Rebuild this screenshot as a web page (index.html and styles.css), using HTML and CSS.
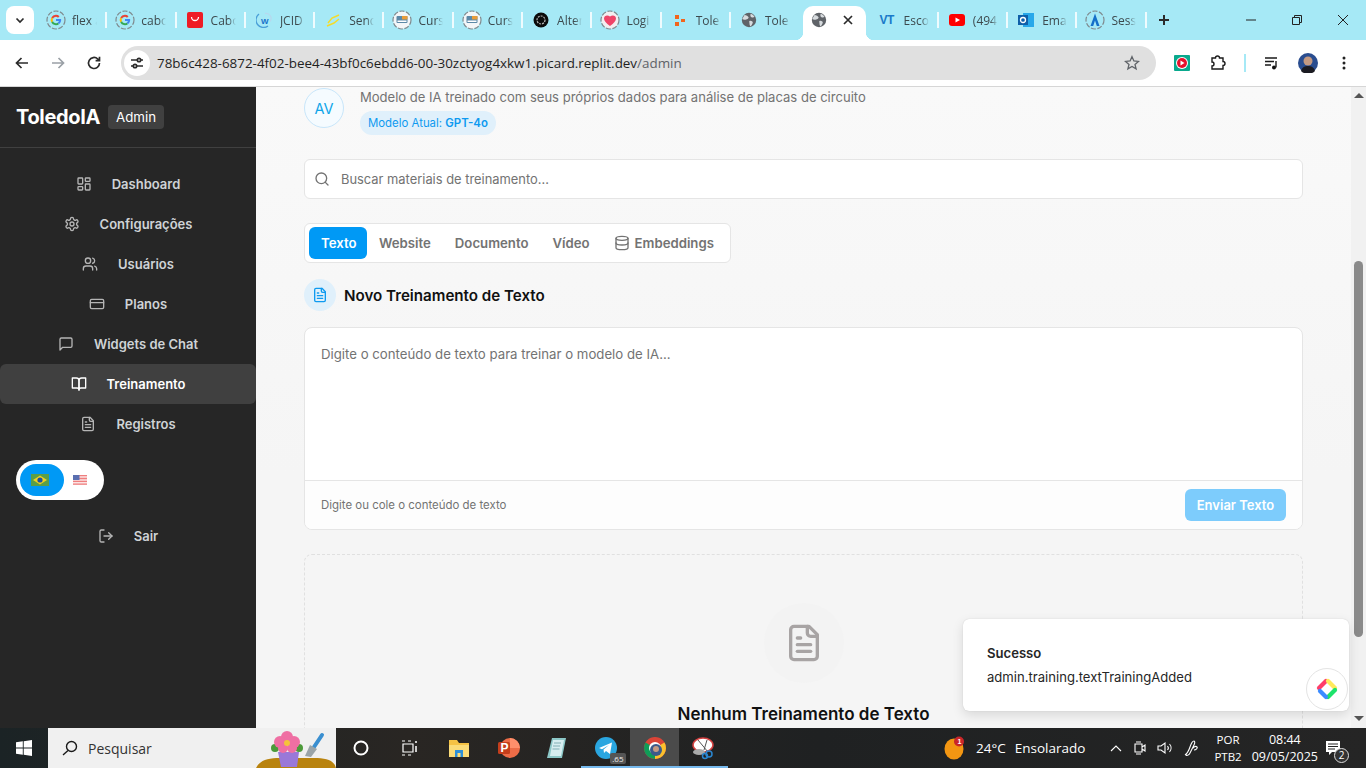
FILE: index.html
```html
<!DOCTYPE html>
<html lang="pt-BR">
<head>
<meta charset="utf-8">
<title>ToledoIA Admin</title>
<link rel="stylesheet" href="styles.css">
</head>
<body>
<svg class="defs" aria-hidden="true">
  <symbol id="i-dash" viewBox="0 0 24 24"><rect x="3" y="3" width="7" height="9" rx="1"/><rect x="14" y="3" width="7" height="5" rx="1"/><rect x="14" y="12" width="7" height="9" rx="1"/><rect x="3" y="16" width="7" height="5" rx="1"/></symbol>
  <symbol id="i-gear" viewBox="0 0 24 24"><path d="M12.22 2h-.44a2 2 0 0 0-2 2v.18a2 2 0 0 1-1 1.73l-.43.25a2 2 0 0 1-2 0l-.15-.08a2 2 0 0 0-2.73.73l-.22.38a2 2 0 0 0 .73 2.73l.15.1a2 2 0 0 1 1 1.72v.51a2 2 0 0 1-1 1.74l-.15.09a2 2 0 0 0-.73 2.73l.22.38a2 2 0 0 0 2.73.73l.15-.08a2 2 0 0 1 2 0l.43.25a2 2 0 0 1 1 1.73V20a2 2 0 0 0 2 2h.44a2 2 0 0 0 2-2v-.18a2 2 0 0 1 1-1.73l.43-.25a2 2 0 0 1 2 0l.15.08a2 2 0 0 0 2.73-.73l.22-.39a2 2 0 0 0-.73-2.73l-.15-.08a2 2 0 0 1-1-1.74v-.5a2 2 0 0 1 1-1.74l.15-.09a2 2 0 0 0 .73-2.73l-.22-.38a2 2 0 0 0-2.73-.73l-.15.08a2 2 0 0 1-2 0l-.43-.25a2 2 0 0 1-1-1.73V4a2 2 0 0 0-2-2z"/><circle cx="12" cy="12" r="3"/></symbol>
  <symbol id="i-users" viewBox="0 0 24 24"><path d="M16 21v-2a4 4 0 0 0-4-4H6a4 4 0 0 0-4 4v2"/><circle cx="9" cy="7" r="4"/><path d="M22 21v-2a4 4 0 0 0-3-3.87"/><path d="M16 3.13a4 4 0 0 1 0 7.75"/></symbol>
  <symbol id="i-card" viewBox="0 0 24 24"><rect x="2" y="5" width="20" height="14" rx="2"/><path d="M2 10h20"/></symbol>
  <symbol id="i-chat" viewBox="0 0 24 24"><path d="M21 15a2 2 0 0 1-2 2H7l-4 4V5a2 2 0 0 1 2-2h14a2 2 0 0 1 2 2z"/></symbol>
  <symbol id="i-book" viewBox="0 0 24 24"><path d="M2 3h6a4 4 0 0 1 4 4v14a3 3 0 0 0-3-3H2z"/><path d="M22 3h-6a4 4 0 0 0-4 4v14a3 3 0 0 1 3-3h7z"/></symbol>
  <symbol id="i-file" viewBox="0 0 24 24"><path d="M15 2H6a2 2 0 0 0-2 2v16a2 2 0 0 0 2 2h12a2 2 0 0 0 2-2V7Z"/><path d="M14 2v4a2 2 0 0 0 2 2h4"/><path d="M10 9H8"/><path d="M16 13H8"/><path d="M16 17H8"/></symbol>
  <symbol id="i-out" viewBox="0 0 24 24"><path d="M9 21H5a2 2 0 0 1-2-2V5a2 2 0 0 1 2-2h4"/><path d="M16 17l5-5-5-5"/><path d="M21 12H9"/></symbol>
  <symbol id="i-search" viewBox="0 0 24 24"><circle cx="11" cy="11" r="8"/><path d="M21 21l-4.35-4.35"/></symbol>
  <symbol id="i-db" viewBox="0 0 24 24"><ellipse cx="12" cy="5" rx="9" ry="3"/><path d="M3 5v14a9 3 0 0 0 18 0V5"/><path d="M3 12a9 3 0 0 0 18 0"/></symbol>
  <symbol id="f-google" viewBox="0 0 20 20"><circle cx="10" cy="10" r="9" fill="none" stroke="#7f8a8e" stroke-width="1.200" stroke-dasharray="5 1.600"/><path d="M10 4.800a5.200 5.200 0 0 1 3.500 1.400l-1.500 1.500A3.100 3.100 0 0 0 7 8.700L5.300 7.500A5.200 5.200 0 0 1 10 4.800z" fill="#ea4335"/><path d="M5.300 7.500 7 8.700a3.200 3.200 0 0 0 0 2.600l-1.700 1.200a5.300 5.300 0 0 1 0-5z" fill="#fbbc05"/><path d="M5.300 12.500 7 11.300a3.100 3.100 0 0 0 4.600 1.400l1.600 1.300a5.200 5.200 0 0 1-7.900-1.500z" fill="#34a853"/><path d="M15.100 9H10v2h2.900a2.600 2.600 0 0 1-1.300 1.700l1.600 1.300c1.500-1.300 2.200-3 1.900-5z" fill="#4285f4"/></symbol>
  <symbol id="f-course" viewBox="0 0 20 20"><circle cx="10" cy="10" r="9" fill="#f3f6f8" stroke="#7f8a8e" stroke-width="1.200" stroke-dasharray="5 1.600"/><rect x="4.500" y="6" width="11" height="7" rx="1" fill="#5b89a8"/><rect x="10" y="6" width="5.500" height="3.500" fill="#e89c3a"/><rect x="5.500" y="10.500" width="9" height="1.500" fill="#fff"/></symbol>
  <symbol id="f-heart" viewBox="0 0 20 20"><circle cx="10" cy="10" r="9" fill="#f3eef0" stroke="#7f8a8e" stroke-width="1.200" stroke-dasharray="5 1.600"/><path d="M10 16C6 13 4 11 4 8.500S7 4.500 10 6.500c3-2 6-.5 6 2s-2 4.500-6 7.500z" fill="#ef4468"/></symbol>
  <symbol id="f-globe" viewBox="0 0 20 20"><circle cx="10" cy="10" r="8" fill="#5f6368"/><path d="M5 4.500c2 .5 4 1 4.500 2.500S8 9 6.800 9.500 3.500 10 2.500 9zM10.500 11c2-.5 3.500.5 3.700 1.500s-1 3-2.200 4.500c-1-.5-1.500-2-1.500-3.500s-.5-2 0-2.500zM12 3c1.500.5 3 1.500 4.200 3.500-1 1-2.500 1-3.500.5S11 4.500 12 3z" fill="#d7dbde"/></symbol>
</svg>

<div class="browser">
  <header class="tabstrip">
    <div class="tabmenu"><svg class="ico12" viewBox="0 0 12 12"><path d="M2.500 4.500 6 8l3.500-3.500" class="stroke-dark"/></svg></div>
    <div class="tab"><svg class="fav fav-ring"><use href="#f-google"/></svg><span class="tabtext">flex a</span></div>
    <div class="tab"><svg class="fav fav-ring"><use href="#f-google"/></svg><span class="tabtext">cabo</span></div>
    <div class="tab"><svg class="fav" viewBox="0 0 16 16"><rect x="0" y="0" width="16" height="16" rx="2" fill="#ee1c25"/><path d="M4.500 5a3.500 3.500 0 0 0 7 0" fill="none" stroke="#fff" stroke-width="1.300"/></svg><span class="tabtext">Cabo</span></div>
    <div class="tab"><svg class="fav" viewBox="0 0 16 16"><path d="M3 2a7 7 0 0 0 9 12" fill="none" stroke="#4a9fd8" stroke-width="1.300"/><path d="M9 1.500a5 5 0 0 1 5 8" fill="none" stroke="#b6d9ee" stroke-width="1.300"/><text x="5" y="12" class="favw">W</text></svg><span class="tabtext">JCID</span></div>
    <div class="tab"><svg class="fav" viewBox="0 0 16 16"><path d="M14 3 7 6 3 11M2 14l7-3 5-4" fill="none" stroke="#f5dc2a" stroke-width="1.500"/></svg><span class="tabtext">Send</span></div>
    <div class="tab"><svg class="fav fav-ring"><use href="#f-course"/></svg><span class="tabtext">Curs</span></div>
    <div class="tab"><svg class="fav fav-ring"><use href="#f-course"/></svg><span class="tabtext">Curs</span></div>
    <div class="tab"><svg class="fav" viewBox="0 0 16 16"><circle cx="8" cy="8" r="7.500" fill="#0b0b0b"/><circle cx="8" cy="8" r="4" fill="none" stroke="#bbb" stroke-width="1.200" stroke-dasharray="2 1"/></svg><span class="tabtext">Alter</span></div>
    <div class="tab"><svg class="fav fav-ring"><use href="#f-heart"/></svg><span class="tabtext">Logi</span></div>
    <div class="tab"><svg class="fav" viewBox="0 0 16 16"><path d="M3 3h4v4H3zM9 7h4v3H9zM3 10h4v4H3z" fill="#f2651c"/></svg><span class="tabtext">Tole</span></div>
    <div class="tab"><svg class="fav fav-globe"><use href="#f-globe"/></svg><span class="tabtext">Tole</span></div>
    <div class="tab tab-active"><svg class="fav fav-globe"><use href="#f-globe"/></svg><svg class="ico12 tabclose" viewBox="0 0 12 12"><path d="M2 2l8 8M10 2l-8 8" class="stroke-dark"/></svg></div>
    <div class="tab"><span class="favvt">VT</span><span class="tabtext">Esco</span></div>
    <div class="tab"><svg class="fav" viewBox="0 0 16 16"><rect x="0" y="2" width="16" height="12" rx="3" fill="#f00"/><path d="M6.500 5.500v5L11 8z" fill="#fff"/></svg><span class="tabtext">(494</span></div>
    <div class="tab"><svg class="fav" viewBox="0 0 16 16"><rect x="5" y="1" width="11" height="14" fill="#28a8ea"/><rect x="0" y="3" width="10" height="10" fill="#0f5fa8"/><circle cx="5" cy="8" r="2.500" fill="none" stroke="#fff" stroke-width="1.300"/></svg><span class="tabtext">Ema</span></div>
    <div class="tab"><svg class="fav fav-ring" viewBox="0 0 20 20"><circle cx="10" cy="10" r="9" fill="none" stroke="#7f8a8e" stroke-width="1.200" stroke-dasharray="5 1.600"/><path d="M10 3.500 14.500 16H11.800L10 10.500 8.200 16H5.500z" fill="#1570c9"/></svg><span class="tabtext">Sess</span></div>
    <div class="tabnew"><svg class="ico12" viewBox="0 0 12 12"><path d="M6 1v10M1 6h10" class="stroke-dark stroke-thick"/></svg></div>
    <div class="winctl">
      <svg class="ico12" viewBox="0 0 12 12"><path d="M1 6h10" class="stroke-thin"/></svg>
      <svg class="ico12" viewBox="0 0 12 12"><path d="M1.500 3.500h7v7h-7zM3.500 3.500v-2h7v7h-2" class="stroke-thin"/></svg>
      <svg class="ico12" viewBox="0 0 12 12"><path d="M1 1l10 10M11 1 1 11" class="stroke-thin"/></svg>
    </div>
  </header>

  <div class="toolbar">
    <button class="tbtn"><svg class="ico16" viewBox="0 0 16 16"><path d="M14 8H2.500M7.500 3 2.500 8l5 5" class="stroke-dark"/></svg></button>
    <button class="tbtn"><svg class="ico16" viewBox="0 0 16 16"><path d="M2 8h11.500M8.500 3l5 5-5 5" class="stroke-grey"/></svg></button>
    <button class="tbtn"><svg class="ico16" viewBox="0 0 16 16"><path d="M13.500 8A5.500 5.500 0 1 1 11.800 4L13.500 5.700M13.500 1.800v3.900H9.600" class="stroke-dark"/></svg></button>
    <div class="address">
      <span class="siteinfo"><svg class="ico14" viewBox="0 0 14 14"><path d="M1 4h6M11 4h2M1 10h2M7 10h6" class="stroke-dark"/><circle cx="9" cy="4" r="1.700" class="stroke-dark"/><circle cx="5" cy="10" r="1.700" class="stroke-dark"/></svg></span>
      <span class="url">78b6c428-6872-4f02-bee4-43bf0c6ebdd6-00-30zctyog4xkw1.picard.replit.dev<span class="urlpath">/admin</span></span>
      <svg class="ico16 star" viewBox="0 0 16 16"><path d="M8 1.700 9.900 6l4.600.4-3.500 3 1.100 4.500L8 11.500l-4.100 2.400L5 9.400l-3.500-3L6.100 6z" class="stroke-star"/></svg>
    </div>
    <button class="tbtn"><svg class="ico18" viewBox="0 0 18 18"><rect x="1" y="1" width="16" height="16" rx="1" fill="#09a98d"/><circle cx="9" cy="9" r="6" fill="#fff"/><circle cx="9" cy="9" r="5" fill="#e8112d"/><path d="M7.500 6.500v5L11.500 9z" fill="#fff"/></svg></button>
    <button class="tbtn"><svg class="ico18" viewBox="0 0 18 18"><path d="M3 4h3.500a2 2 0 0 1 4 0H14v3.500a2 2 0 0 1 0 4V15H3v-3a2 2 0 0 0 0-4z" class="stroke-black"/></svg></button>
    <span class="tbdivider"></span>
    <button class="tbtn"><svg class="ico16" viewBox="0 0 16 16"><path d="M1 3h12M1 6.500h9M1 10h6" class="stroke-black"/><path d="M12 6v6.500" class="stroke-black"/><circle cx="10" cy="12.500" r="2" fill="#111"/></svg></button>
    <button class="tbtn"><svg class="ico20" viewBox="0 0 20 20"><circle cx="10" cy="10" r="10" fill="#2a4d8f"/><circle cx="10" cy="8" r="4.500" fill="#c49a82"/><path d="M3 18c1-4 4-5 7-5s6 1 7 5a10 10 0 0 1-14 0z" fill="#1b1b22"/></svg></button>
    <button class="tbtn"><svg class="ico16" viewBox="0 0 16 16"><circle cx="8" cy="3" r="1.500" fill="#222"/><circle cx="8" cy="8" r="1.500" fill="#222"/><circle cx="8" cy="13" r="1.500" fill="#222"/></svg></button>
  </div>

  <div class="app">
    <aside class="sidebar">
      <div class="brand"><span class="brandname">ToledoIA</span><span class="badge">Admin</span></div>
      <nav class="nav">
        <a class="navitem"><svg class="lu lu16"><use href="#i-dash"/></svg><span>Dashboard</span></a>
        <a class="navitem"><svg class="lu lu16"><use href="#i-gear"/></svg><span>Configurações</span></a>
        <a class="navitem"><svg class="lu lu16"><use href="#i-users"/></svg><span>Usuários</span></a>
        <a class="navitem"><svg class="lu lu16"><use href="#i-card"/></svg><span>Planos</span></a>
        <a class="navitem"><svg class="lu lu16"><use href="#i-chat"/></svg><span>Widgets de Chat</span></a>
        <a class="navitem navitem-active"><svg class="lu lu16"><use href="#i-book"/></svg><span>Treinamento</span></a>
        <a class="navitem"><svg class="lu lu16"><use href="#i-file"/></svg><span>Registros</span></a>
      </nav>
      <div class="langtoggle">
        <span class="lang lang-on"><svg class="flag-br" viewBox="0 0 18 12"><rect width="18" height="12" fill="#5a9e48"/><path d="M9 1.500 16 6l-7 4.500L2 6z" fill="#f2d21f"/><circle cx="9" cy="6" r="2.600" fill="#1e4fa0"/></svg></span>
        <span class="lang"><svg class="flag-us" viewBox="0 0 14 10"><rect width="14" height="10" fill="#fbe3e3"/><path d="M0 .7h14M0 3.500h14M0 6.300h14M0 9.200h14" stroke="#ef7f7f" stroke-width="1.300"/><rect width="6.500" height="5" fill="#5a6fb0"/></svg></span>
      </div>
      <a class="navitem navitem-out"><svg class="lu lu16"><use href="#i-out"/></svg><span>Sair</span></a>
    </aside>

    <main class="main">
      <section class="pagehead">
        <span class="avatar">AV</span>
        <div class="headtext">
          <p class="subtitle">Modelo de IA treinado com seus próprios dados para análise de placas de circuito</p>
          <span class="modelpill">Modelo Atual: <b>GPT-4o</b></span>
        </div>
      </section>
      <div class="search"><svg class="lu lu16"><use href="#i-search"/></svg><span class="searchtext">Buscar materiais de treinamento...</span></div>
      <div class="tabsbox">
        <span class="ttab ttab-on">Texto</span>
        <span class="ttab">Website</span>
        <span class="ttab">Documento</span>
        <span class="ttab">Vídeo</span>
        <span class="ttab ttab-icon"><svg class="lu lu16"><use href="#i-db"/></svg>Embeddings</span>
      </div>
      <h2 class="sectionhead"><span class="sectionicon"><svg class="lu lu16"><use href="#i-file"/></svg></span>Novo Treinamento de Texto</h2>
      <div class="editor">
        <div class="editorbody">Digite o conteúdo de texto para treinar o modelo de IA...</div>
        <div class="editorfoot"><span>Digite ou cole o conteúdo de texto</span><button class="sendbtn">Enviar Texto</button></div>
      </div>
      <section class="empty">
        <span class="emptyicon"><svg class="lu lu40"><use href="#i-file"/></svg></span>
        <h3>Nenhum Treinamento de Texto</h3>
      </section>
    </main>

    <div class="scrollbar">
      <span class="arrow arrow-up"></span>
      <span class="thumb"></span>
      <span class="arrow arrow-down"></span>
    </div>

    <div class="toast"><strong>Sucesso</strong><span>admin.training.textTrainingAdded</span></div>
    <div class="fab"><svg class="ico24" viewBox="0 0 24 24"><g fill="none" stroke-width="4.200" stroke-linecap="round"><path d="M11 4 4 11" stroke="#ff3d68"/><path d="M13 4l7 7" stroke="#ffe95c"/><path d="M20 13l-7 7" stroke="#1ce36b"/><path d="M11 20l-6-6" stroke="#3b8bff"/></g></svg></div>
  </div>

  <footer class="taskbar">
    <div class="startbtn"><svg class="ico16" viewBox="0 0 16 16"><path d="M0 2.300 6.800 1.300V7.500H0zM7.700 1.200 16 0V7.500H7.700zM0 8.500H6.800V14.700L0 13.700zM7.700 8.500H16V16L7.700 14.800z" fill="#fff"/></svg></div>
    <div class="tasksearch">
      <svg class="ico16" viewBox="0 0 16 16"><circle cx="9.500" cy="6.500" r="5" class="stroke-black"/><path d="M6 10.500 1 15" class="stroke-black"/></svg>
      <span>Pesquisar</span>
      <svg class="flower" viewBox="0 0 80 40"><path d="M0 40C4 32 12 30 24 30h34c12 0 20 2 22 10z" fill="#b9830e"/><path d="M66 7l-8 12" stroke="#3a8fd0" stroke-width="4" stroke-linecap="round"/><path d="M54 17l7 4-6 8-6-1z" fill="#9aa4a8"/><circle cx="19" cy="20" r="4" fill="#4c9a3a"/><circle cx="43" cy="20" r="4" fill="#4c9a3a"/><path d="M22 24h21l-2 15H25z" fill="#9a78d8"/><g fill="#ef6fa3"><circle cx="31" cy="9" r="6"/><circle cx="24" cy="14" r="6"/><circle cx="38" cy="14" r="6"/><circle cx="27" cy="20" r="5"/><circle cx="36" cy="20" r="5"/></g><circle cx="31" cy="15" r="3" fill="#f5c33b"/></svg>
    </div>
    <div class="tb"><svg class="ico16" viewBox="0 0 16 16"><circle cx="8" cy="8" r="6.500" fill="none" stroke="#fff" stroke-width="2"/></svg></div>
    <div class="tb"><svg class="ico18" viewBox="0 0 18 18"><path d="M2 5h10v8H2zM1 2h3M7 2h3M1 16h3M7 16h3" fill="none" stroke="#fff" stroke-width="1.200"/><path d="M15 2v2M15 7v6" stroke="#fff" stroke-width="1.500"/></svg></div>
    <div class="tb"><svg class="ico22" viewBox="0 0 22 22"><path d="M1 3h8l2 3h10v14H1z" fill="#f5c244"/><path d="M1 8h20v12H1z" fill="#fbdc78"/><path d="M7 13h8v7h-2.500v-4h-3v4H7z" fill="#2d8fd8"/></svg></div>
    <div class="tb"><svg class="ico24" viewBox="0 0 24 24"><circle cx="14" cy="12" r="10" fill="#ed6c47"/><path d="M14 2a10 10 0 0 1 10 10H14z" fill="#ff8f6b"/><rect x="2" y="6" width="12" height="12" rx="1.500" fill="#c43e1c"/><text x="4.600" y="15.800" class="favp">P</text></svg></div>
    <div class="tb"><svg class="ico24" viewBox="0 0 24 24"><path d="M7 2h14l-4 20H2z" fill="#8dc8c8"/><path d="M8 4h11l-3 16H5z" fill="#d7eef0"/><path d="M9 7h7M8 10h7M7.500 13h7" stroke="#82aeb4"/></svg></div>
    <div class="tb tb-run"><span class="tgwrap"><svg class="ico24" viewBox="0 0 24 24"><circle cx="12" cy="12" r="11" fill="#2aa6e0"/><path d="M5 12 18 6.500 16 18l-4-3-2 2-.5-3.500L15 9l-7 4.200z" fill="#fff"/></svg><span class="tgbadge">.65</span></span></div>
    <div class="tb tb-active"><svg class="ico24" viewBox="0 0 24 24"><circle cx="12" cy="12" r="11" fill="#db4437"/><path d="M12 12 21.500 6.500A11 11 0 0 1 12 23z" fill="#fbc02d"/><path d="M12 12 2.500 6.500A11 11 0 0 0 12 23z" fill="#0f9d58"/><circle cx="12" cy="12" r="6" fill="#fff"/><circle cx="13" cy="14" r="6" fill="#3c5a8a"/><circle cx="13" cy="13" r="3" fill="#c49a82"/></svg></div>
    <div class="tb tb-run"><svg class="ico24" viewBox="0 0 24 24"><ellipse cx="11" cy="9" rx="10" ry="7" fill="#fff" stroke="#d34040" stroke-width="1.500"/><ellipse cx="7" cy="16" rx="6" ry="3" fill="#aaa"/><path d="M6 4l10 12M15 4 12 14" stroke="#555"/><circle cx="17" cy="18" r="3" fill="none" stroke="#2a86d0" stroke-width="1.500"/><circle cx="13" cy="20" r="2.500" fill="none" stroke="#2a86d0" stroke-width="1.500"/></svg></div>

    <div class="tray">
      <span class="weather"><svg class="ico24" viewBox="0 0 24 24"><ellipse cx="10" cy="13" rx="9.500" ry="10.500" fill="#f39612"/><circle cx="15" cy="5.500" r="5" fill="#c9262a"/><text x="13.500" y="8" class="favn">1</text></svg></span>
      <span class="trtemp">24°C</span>
      <span class="trcond">Ensolarado</span>
      <svg class="ico14 trchev" viewBox="0 0 14 14"><path d="M2 10l5-5 5 5" class="stroke-white"/></svg>
      <svg class="ico14 tri" viewBox="0 0 14 14"><path d="M2 3h7v8H2zM9 6l3-2v6l-3-2M3 1h5M3 13h5" class="stroke-white"/></svg>
      <svg class="ico16 tri" viewBox="0 0 16 16"><path d="M1 6h3l4-3v10l-4-3H1zM10.500 6a3 3 0 0 1 0 4M12.500 4a6 6 0 0 1 0 8" class="stroke-white"/></svg>
      <svg class="ico18 tri" viewBox="0 0 18 18"><path d="M2 16c3-2 4-5 5-8s3-6 4-6 1 2 0 4-3 6-4 8-3 3-4 2M10 9c1-1 3-2 4-1s-1 3-3 3" class="stroke-white"/></svg>
      <span class="trlang"><span>POR</span><span>PTB2</span></span>
      <span class="trclock"><span>08:44</span><span>09/05/2025</span></span>
      <span class="trnotif"><svg class="ico16" viewBox="0 0 16 16"><path d="M1 1h14v11H7l-3 3v-3H1z" fill="#fff"/><path d="M3 4h10M3 6.500h10M3 9h7" stroke="#222"/></svg><span class="notifcount">2</span></span>
    </div>
  </footer>
</div>
</body>
</html>
```
FILE: styles.css
```css
* { box-sizing: border-box; }
html, body { margin: 0; height: 100%; overflow: hidden; }
body { font-family: Inter, "Noto Sans", sans-serif; color: #111; }
p, h2, h3 { margin: 0; }
button { border: 0; background: none; padding: 0; font: inherit; }
.defs { position: absolute; width: 0; height: 0; }

.ico12 { width: 12px; height: 12px; }
.ico14 { width: 14px; height: 14px; }
.ico16 { width: 16px; height: 16px; }
.ico18 { width: 18px; height: 18px; }
.ico20 { width: 20px; height: 20px; }
.ico22 { width: 22px; height: 22px; }
.ico24 { width: 24px; height: 24px; }
.stroke-dark, .stroke-grey, .stroke-black, .stroke-white, .stroke-thin, .stroke-star { fill: none; stroke-width: 1.700; }
.stroke-dark { stroke: #2b2b2b; }
.stroke-thick { stroke-width: 2; }
.stroke-grey { stroke: #9aa0a6; }
.stroke-black { stroke: #1a1a1a; stroke-width: 1.400; }
.stroke-white { stroke: #fff; stroke-width: 1.100; }
.stroke-thin { stroke: #222; stroke-width: 1; }
.stroke-star { stroke: #5f6368; stroke-width: 1.300; }

.lu { fill: none; stroke: currentColor; stroke-width: 2; stroke-linecap: round; stroke-linejoin: round; flex: none; }
.lu16 { width: 16px; height: 16px; }
.lu40 { width: 40px; height: 40px; }

.browser { width: 1366px; height: 768px; display: flex; flex-direction: column; }

/* tab strip */
.tabstrip { height: 40px; flex: none; background: #a6e9f6; display: flex; align-items: flex-end; position: relative; padding-left: 38px; font-family: "Open Sans", sans-serif; }
.tabmenu { position: absolute; left: 6px; top: 6px; width: 28px; height: 28px; border-radius: 8px; background: #fff; display: flex; align-items: center; justify-content: center; }
.tab { width: 69.3px; height: 34px; flex: none; display: flex; align-items: center; padding: 0 0 6px 10px; gap: 8px; font-size: 12px; color: #3d4a4e; }
.tab::after { content: ""; width: 2px; height: 16px; background: #eefbfe; margin-left: auto; }
.fav { width: 16px; height: 16px; flex: none; }
.fav-ring { width: 20px; height: 20px; margin: 0 -2px; }
.fav-globe { width: 18px; height: 18px; margin: 0 -1px; }
.favw { font: 700 8px "Liberation Sans", sans-serif; fill: #1570c9; }
.favp { font: 700 12px "Liberation Sans", sans-serif; fill: #fff; }
.favn { font: 700 7px "Liberation Sans", sans-serif; fill: #fff; }
.favvt { width: 16px; flex: none; font: 700 12px/16px "Liberation Sans", sans-serif; color: #1a79c9; letter-spacing: -0.500px; }
.tabtext { width: 25px; overflow: hidden; white-space: nowrap; flex: none; -webkit-mask-image: linear-gradient(90deg, #000 70%, transparent); mask-image: linear-gradient(90deg, #000 70%, transparent); }
.tab:has(+ .tab-active)::after, .tab-active::after { display: none; }
.tab-active { background: #fff; border-radius: 10px 10px 0 0; position: relative; width: 63px; margin: 0 3.300px 0 3px; padding-left: 8px; gap: 15px; }
.tab-active::before { content: ""; position: absolute; left: -8px; right: -8px; bottom: 0; height: 8px; z-index: 0; background:
  radial-gradient(circle at 0 0, #a6e9f6 8px, #fff 8.500px) left bottom / 8px 8px no-repeat,
  radial-gradient(circle at 100% 0, #a6e9f6 8px, #fff 8.500px) right bottom / 8px 8px no-repeat; }
.tabclose { flex: none; }
.tabnew { width: 34px; height: 34px; flex: none; display: flex; align-items: center; justify-content: center; padding-bottom: 6px; }
.winctl { margin-left: auto; width: 138px; height: 40px; align-self: flex-start; display: flex; justify-content: space-around; align-items: center; }

/* toolbar */
.toolbar { height: 47px; flex: none; background: #fff; border-bottom: 1px solid #d6d6d6; display: flex; align-items: center; padding: 0 4px 1px; }
.tbtn { width: 36px; height: 34px; flex: none; display: flex; align-items: center; justify-content: center; }
.address { width: 1035px; height: 34px; margin: 0 8px 0 9px; background: #e0e0e0; border-radius: 17px; display: flex; align-items: center; padding: 0 16px 0 3px; font-family: "Open Sans", sans-serif; font-size: 13.420px; color: #1f1f1f; }
.siteinfo { width: 26px; height: 26px; border-radius: 50%; background: #fff; display: flex; align-items: center; justify-content: center; flex: none; margin-right: 7px; }
.url { flex: 1; white-space: nowrap; }
.urlpath { color: #5f6368; }
.tbdivider { width: 2px; height: 18px; background: #a6e9f6; margin: 0 8px; flex: none; }

/* app */
.app { flex: 1; min-height: 0; display: flex; position: relative; }
.sidebar { width: 256px; flex: none; background: #262626; color: #d4d4d4; display: flex; flex-direction: column; }
.brand { height: 61px; flex: none; border-bottom: 1px solid #404040; display: flex; align-items: center; padding: 0 16px 1px; gap: 8px; }
.brandname { font-size: 20px; font-weight: 700; color: #fff; letter-spacing: -0.350px; }
.badge { height: 24px; padding: 0 8px; background: #404040; border-radius: 4px; color: #fff; font-size: 13.300px; line-height: 24px; }
.nav { padding-top: 16px; display: flex; flex-direction: column; }
.navitem { height: 40px; display: flex; align-items: center; justify-content: center; gap: 20px; font-size: 13px; font-weight: 600; border-radius: 6px; color: #cfd3d6; }
.navitem .lu { color: #b5b5b5; }
.navitem-active { background: #404040; color: #fff; }
.navitem-active .lu { color: #fff; }
.navitem-out { margin-top: 16px; }
.langtoggle { margin: 16px 0 0 16px; width: 88px; height: 40px; background: #fff; border-radius: 20px; padding: 4px; display: flex; align-items: center; }
.lang { width: 44px; height: 32px; border-radius: 16px; display: flex; align-items: center; justify-content: center; flex: none; }
.lang-on { background: #0099f5; }
.flag-br { width: 18px; height: 12px; margin-left: -4px; }
.flag-us { width: 14px; height: 10px; margin-left: -12px; }

/* main */
.main { flex: 1; min-width: 0; overflow: hidden; background: linear-gradient(#f9f9f9, #f5f5f5 60%); padding: 0 48px; }
.pagehead { display: flex; gap: 16px; height: 72px; padding-top: 1px; }
.avatar { width: 40px; height: 40px; border-radius: 50%; background: #f5fbff; border: 1px solid #c8e6fa; color: #0ea5e9; font-size: 14.500px; display: flex; align-items: center; justify-content: center; flex: none; }
.headtext { margin-top: -1px; }
.subtitle { font-size: 13.050px; line-height: 20px; color: #737373; white-space: nowrap; }
.modelpill { display: inline-block; height: 24px; line-height: 24px; margin-top: 4px; padding: 0 8px; background: #e0f0fb; border-radius: 12px; font-size: 11.400px; color: #0e9af0; }
.modelpill b { font-weight: 600; }
.search { height: 40px; background: #fff; border: 1px solid #e5e5e5; border-radius: 6px; display: flex; align-items: center; padding: 0 9px; gap: 11px; font-size: 12.900px; color: #737373; }
.searchtext { padding-top: 1px; }
.tabsbox { margin-top: 24px; width: 427px; height: 40px; background: #fff; border: 1px solid #e5e5e5; border-radius: 6px; display: flex; align-items: center; padding: 0 4px; font-size: 13.200px; font-weight: 600; color: #737373; }
.ttab { height: 32px; display: flex; align-items: center; padding: 0 12px; white-space: nowrap; flex: none; }
.ttab-on { width: 58px; background: #0099f5; color: #fff; border-radius: 6px; }
.ttab-icon { gap: 5px; }
.sectionhead { margin-top: 16px; height: 32px; display: flex; align-items: center; gap: 8px; font-size: 15.150px; font-weight: 600; color: #111; }
.sectionicon { width: 32px; height: 32px; border-radius: 50%; background: #e0f0fb; color: #0e9af0; display: flex; align-items: center; justify-content: center; }
.editor { margin-top: 16px; height: 203px; background: #fff; border: 1px solid #e5e5e5; border-radius: 8px; display: flex; flex-direction: column; overflow: hidden; }
.editorbody { height: 153px; padding: 16px; font-size: 13.230px; line-height: 20px; color: #737373; border-bottom: 1px solid #e5e5e5; }
.editorfoot { flex: 1; background: #fdfdfd; display: flex; align-items: center; justify-content: space-between; padding: 0 16px; font-size: 11.450px; color: #737373; }
.sendbtn { width: 101px; height: 32px; background: #7dccfc; color: #fff; border-radius: 6px; font-size: 13px; font-weight: 600; }
.empty { margin-top: 24px; height: 300px; border: 1px dashed #e0e0e0; border-radius: 8px; display: flex; flex-direction: column; align-items: center; padding-top: 48px; }
.emptyicon { width: 80px; height: 80px; border-radius: 50%; background: #f3f3f3; color: #a8a4a4; display: flex; align-items: center; justify-content: center; }
.empty h3 { margin-top: 20px; font-size: 17px; font-weight: 600; line-height: 22px; color: #111; }

.scrollbar { width: 15px; flex: none; background: #f1f1f1; display: flex; flex-direction: column; align-items: center; }
.arrow { width: 0; height: 0; border-left: 5px solid transparent; border-right: 5px solid transparent; flex: none; }
.arrow-up { border-bottom: 5px solid #555; margin-top: 6px; }
.thumb { width: 9px; height: 376px; margin-top: 163px; background: #8a8a8a; border-radius: 5px; flex: none; }
.arrow-down { border-top: 5px solid #555; margin-top: auto; margin-bottom: 7px; }

.toast { position: absolute; left: 963px; top: 532px; width: 386px; height: 92px; background: #fff; border-radius: 6px; box-shadow: 0 4px 12px rgba(0,0,0,.12), 0 0 1px rgba(0,0,0,.2); padding: 25px 24px 0; display: flex; flex-direction: column; gap: 6px; font-size: 13.100px; line-height: 18px; color: #262626; }
.toast strong { font-weight: 600; }
.fab { position: absolute; left: 1306px; top: 581px; width: 42px; height: 42px; border-radius: 50%; background: #fff; border: 1px solid #e4e4e4; display: flex; align-items: center; justify-content: center; }

/* taskbar */
.taskbar { height: 40px; flex: none; background: linear-gradient(90deg, #1b2325, #292623 30%, #1f2122 60%, #252525); display: flex; font-family: "Open Sans", sans-serif; color: #fff; }
.startbtn { width: 48px; display: flex; align-items: center; justify-content: center; flex: none; }
.tasksearch { width: 288px; background: #f0f0f0; color: #333; display: flex; align-items: center; flex: none; font-size: 14px; padding-left: 14px; gap: 10px; position: relative; overflow: hidden; }
.tasksearch .flower { position: absolute; right: 0; top: 0; width: 80px; height: 40px; }
.tb { width: 49px; flex: none; display: flex; align-items: center; justify-content: center; }
.tb-run { box-shadow: inset 0 -2px 0 #76b9ed; }
.tb-active { background: #4b4b4b; box-shadow: inset 0 -2px 0 #76b9ed; }
.tgwrap { position: relative; display: flex; }
.tgbadge { position: absolute; right: -8px; bottom: -4px; background: #555; border-radius: 2px; font-size: 8px; line-height: 11px; padding: 0 2px; color: #eee; }
.tray { margin-left: auto; display: flex; align-items: center; font-size: 13.500px; }
.weather { display: flex; margin-right: 8px; }
.trcond { margin-left: 9px; }
.trchev { margin-left: 24px; }
.tri { margin-left: 10px; }
.trlang, .trclock { display: flex; flex-direction: column; align-items: center; line-height: 17px; }
.trlang { margin-left: 13px; font-size: 11.500px; }
.trclock { margin-left: 10px; font-size: 12.500px; }
.trnotif { position: relative; display: flex; margin: 0 25px 0 7px; }
.notifcount { position: absolute; right: -8px; bottom: -7px; width: 15px; height: 15px; border-radius: 50%; border: 1px solid #ddd; background: #333; font-size: 10px; line-height: 13px; text-align: center; }
```
